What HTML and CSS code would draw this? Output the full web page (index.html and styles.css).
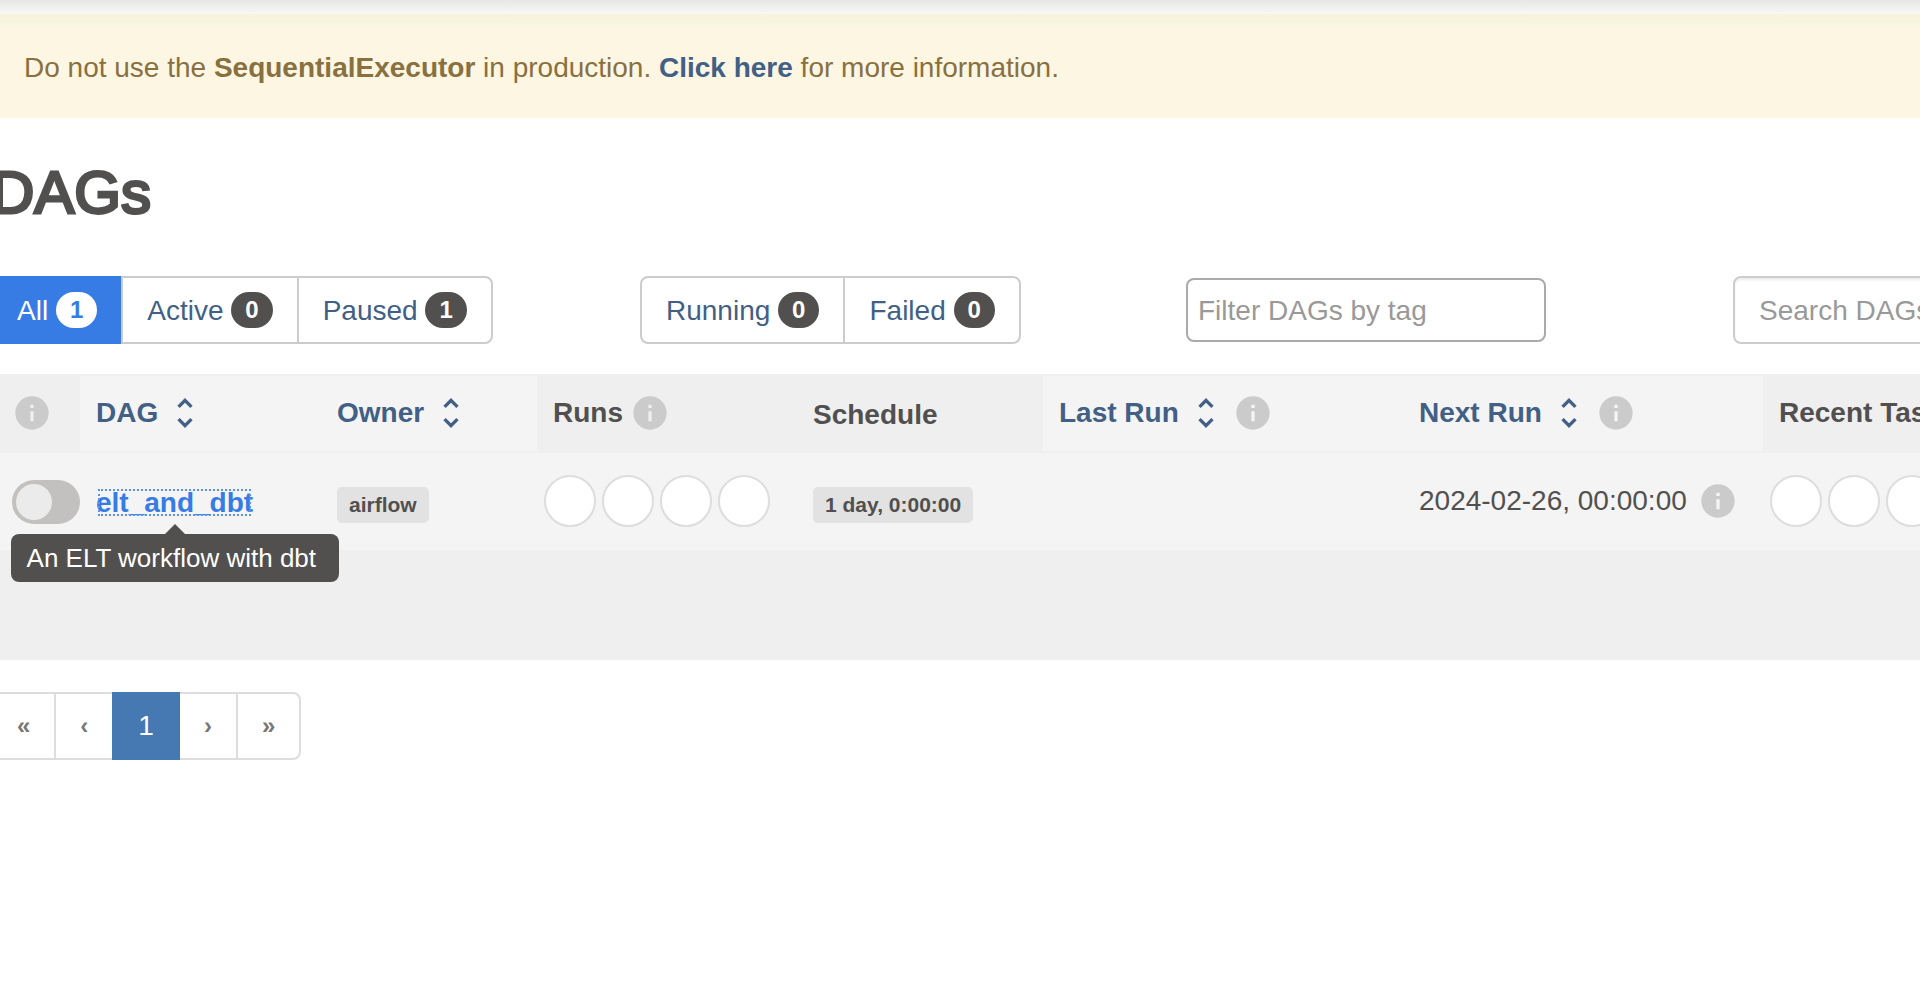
FILE: index.html
```html
<!DOCTYPE html>
<html lang="en">
<head>
<meta charset="utf-8">
<title>DAGs - Airflow</title>
<link rel="stylesheet" href="styles.css">
</head>
<body>
<svg class="sprite" aria-hidden="true">
  <symbol id="icon-info" viewBox="0 0 24 24"><path d="M12 2C6.48 2 2 6.48 2 12s4.48 10 10 10 10-4.48 10-10S17.52 2 12 2zm1 15h-2v-6h2v6zm0-8h-2V7h2v2z"/></symbol>
  <symbol id="icon-sort" viewBox="0 0 24 24"><path d="M12 5.83L15.17 9l1.41-1.41L12 3 7.41 7.59 8.83 9 12 5.83zm0 12.34L8.83 15l-1.41 1.41L12 21l4.59-4.59L15.17 15 12 18.17z"/></symbol>
</svg>
<div class="nav-shadow"></div>
<div class="alert">Do not use the <strong>SequentialExecutor</strong> in production. <a href="#">Click here</a> for more information.</div>
<main class="page">
  <h1>DAGs</h1>
  <div class="filters">
    <div class="btn-group">
      <a class="btn active" href="#">All <span class="badge">1</span></a>
      <a class="btn" href="#">Active <span class="badge">0</span></a>
      <a class="btn" href="#">Paused <span class="badge">1</span></a>
    </div>
    <div class="btn-group">
      <a class="btn" href="#">Running <span class="badge">0</span></a>
      <a class="btn" href="#">Failed <span class="badge">0</span></a>
    </div>
    <input class="tag-filter" type="text" aria-label="Filter DAGs by tag" placeholder="Filter DAGs by tag">
    <input class="search" type="text" aria-label="Search DAGs" placeholder="Search DAGs">
  </div>
  <div class="table-wrap">
    <table>
      <colgroup>
        <col class="c-toggle"><col class="c-dag"><col class="c-owner"><col class="c-runs"><col class="c-schedule"><col class="c-date"><col class="c-date"><col>
      </colgroup>
      <thead>
        <tr>
          <th class="lead"><div class="head"><svg class="icon info"><use href="#icon-info"/></svg></div></th>
          <th class="sortable"><a class="head" href="#">DAG<svg class="icon"><use href="#icon-sort"/></svg></a></th>
          <th class="sortable"><a class="head" href="#">Owner<svg class="icon"><use href="#icon-sort"/></svg></a></th>
          <th><div class="head">Runs<svg class="icon info"><use href="#icon-info"/></svg></div></th>
          <th>Schedule</th>
          <th class="sortable"><a class="head" href="#">Last Run<svg class="icon"><use href="#icon-sort"/></svg><svg class="icon info"><use href="#icon-info"/></svg></a></th>
          <th class="sortable"><a class="head" href="#">Next Run<svg class="icon"><use href="#icon-sort"/></svg><svg class="icon info"><use href="#icon-info"/></svg></a></th>
          <th><div class="head">Recent Tasks</div></th>
        </tr>
      </thead>
      <tbody>
        <tr>
          <td class="lead"><input class="toggle" type="checkbox" aria-label="Pause or unpause elt_and_dbt"></td>
          <td class="name"><span class="dag"><a class="dag-link" href="#">elt_and_dbt</a><span class="tooltip" role="tooltip">An ELT workflow with dbt</span></span></td>
          <td class="labels"><a class="label" href="#">airflow</a></td>
          <td class="states"><div class="circles"><i></i><i></i><i></i><i></i></div></td>
          <td class="labels"><a class="label" href="#">1 day, 0:00:00</a></td>
          <td></td>
          <td><div class="next">2024-02-26, 00:00:00<svg class="icon info"><use href="#icon-info"/></svg></div></td>
          <td class="states"><div class="circles"><i></i><i></i><i></i><i></i></div></td>
        </tr>
      </tbody>
    </table>
  </div>
  <nav class="pagination" aria-label="Pages">
    <a href="#">«</a><a href="#">‹</a><a class="current" href="#">1</a><a href="#">›</a><a href="#">»</a>
  </nav>
</main>
</body>
</html>
```
FILE: styles.css
```css
* { box-sizing: border-box; }

body {
  margin: 0;
  overflow: hidden;
  background: #fff;
  color: #51504f;
  font: 28px/40px "Liberation Sans", Arial, sans-serif;
}

a { color: #425f85; text-decoration: none; }

.sprite { display: none; }

.nav-shadow {
  height: 14px;
  background: linear-gradient(#e7e7e5, #f8f8f8);
}

.alert {
  padding: 34px 24px 30px;
  background: linear-gradient(#f5f3da, #f9f7e1 14px, #fdf6e3 14px);
  color: #89703f;
}
.alert a { font-weight: bold; }

/* The page is scrolled a little sideways, so it runs past both edges. */
.page { margin: 0 -200px 0 -9px; }

h1 {
  margin: 39px 0 47px;
  font-size: 60px;
  line-height: 72px;
  font-weight: normal;
  -webkit-text-stroke: 3px #51504f;
}

.filters {
  display: grid;
  grid-template-columns: 649px 546px 547px 1fr;
  align-items: center;
  margin-bottom: 30px;
}

.btn-group { display: flex; }
.btn {
  padding: 13px 24px 11px;
  border: 2px solid #ccc;
  white-space: nowrap;
}
.btn + .btn { margin-left: -2px; }
.btn:first-child { border-radius: 8px 0 0 8px; }
.btn:last-child { border-radius: 0 8px 8px 0; }
.btn.active { background: #377be5; border-color: #377be5; color: #fff; }

.badge {
  display: inline-block;
  padding: 6px 14px;
  border-radius: 20px;
  background: #51504f;
  color: #fff;
  font-size: 24px;
  line-height: 24px;
  font-weight: bold;
  vertical-align: middle;
  margin-top: -6px;
}
.active .badge { background: #fff; color: #377be5; }

input { font: inherit; color: inherit; }
input::placeholder { color: #999; opacity: 1; }

.tag-filter {
  width: 360px;
  height: 64px;
  padding: 2px 10px 0;
  border: 2px solid #aaa;
  border-radius: 8px;
}
.search {
  height: 68px;
  padding: 2px 24px 0;
  border: 2px solid #ccc;
  border-radius: 8px;
  box-shadow: inset 0 2px 2px rgba(0, 0, 0, .075);
}

.table-wrap { padding-bottom: 110px; background: #efefef; }

table {
  width: 100%;
  table-layout: fixed;
  border-collapse: separate;
  border-spacing: 0;
}
.c-toggle { width: 89px; }
.c-dag { width: 241px; }
.c-owner { width: 216px; }
.c-runs { width: 260px; }
.c-schedule { width: 246px; }
.c-date { width: 360px; }

th {
  padding: 15px 16px 16px;
  border: solid #efefef;
  border-width: 2px 0;
  text-align: left;
  vertical-align: bottom;
  white-space: nowrap;
}
.sortable { background: #f4f4f4; }
.head { display: flex; align-items: center; gap: 7px; height: 44px; }

td {
  height: 97px;
  padding: 0 16px 2px;
  background: #f4f4f4;
  vertical-align: middle;
  white-space: nowrap;
}
.lead { padding-left: 21px; padding-right: 0; }
td.lead { padding-bottom: 0; }
.name { padding-top: 2px; padding-bottom: 0; }
.states { padding-left: 7px; padding-right: 0; }
.labels { padding-top: 6px; }

.icon { width: 40px; height: 40px; flex: none; fill: currentColor; }
.info { fill: #cbcbcb; }

.toggle {
  appearance: none;
  display: block;
  width: 68px;
  height: 44px;
  margin: 0;
  padding: 4px;
  border-radius: 22px;
  background: #c2c1bf;
}
.toggle::before {
  content: "";
  display: block;
  width: 36px;
  height: 36px;
  border-radius: 50%;
  background: #ebebeb;
}

.dag { position: relative; display: inline-block; }
.dag-link {
  color: #377be5;
  font-weight: bold;
  outline: 2px dotted #5a94e8;
  outline-offset: -4px;
}

.tooltip {
  position: absolute;
  top: calc(100% + 11px);
  left: 50%;
  transform: translateX(-50%);
  min-width: 328px;
  padding: 6px 16px;
  border-radius: 8px;
  background: #51504f;
  color: #fff;
  font-size: 26px;
  line-height: 36px;
}
.tooltip::before {
  content: "";
  position: absolute;
  bottom: 100%;
  left: 50%;
  margin-left: -10px;
  border: 10px solid transparent;
  border-top: 0;
  border-bottom-color: #51504f;
}

.label {
  display: inline-block;
  padding: 0 12px;
  border-radius: 5px;
  background: #e2e2e2;
  color: #51504f;
  font-size: 21px;
  line-height: 36px;
  font-weight: bold;
  vertical-align: middle;
}

.circles { display: flex; gap: 6px; }
.circles i {
  width: 52px;
  height: 52px;
  border: 2px solid #ddd;
  border-radius: 50%;
  background: #fff;
}

.next { display: flex; align-items: center; gap: 11px; }

.pagination { display: flex; margin-top: 32px; }
.pagination a {
  padding: 12px 24px;
  border: 2px solid #ddd;
  color: #777;
  font-size: 24px;
  font-weight: bold;
}
.pagination a + a { margin-left: -2px; }
.pagination a:last-child { border-radius: 0 8px 8px 0; }
.pagination .current {
  position: relative;
  background: #4679b2;
  border-color: #4679b2;
  color: #fff;
  font-size: 28px;
  font-weight: normal;
}
```
